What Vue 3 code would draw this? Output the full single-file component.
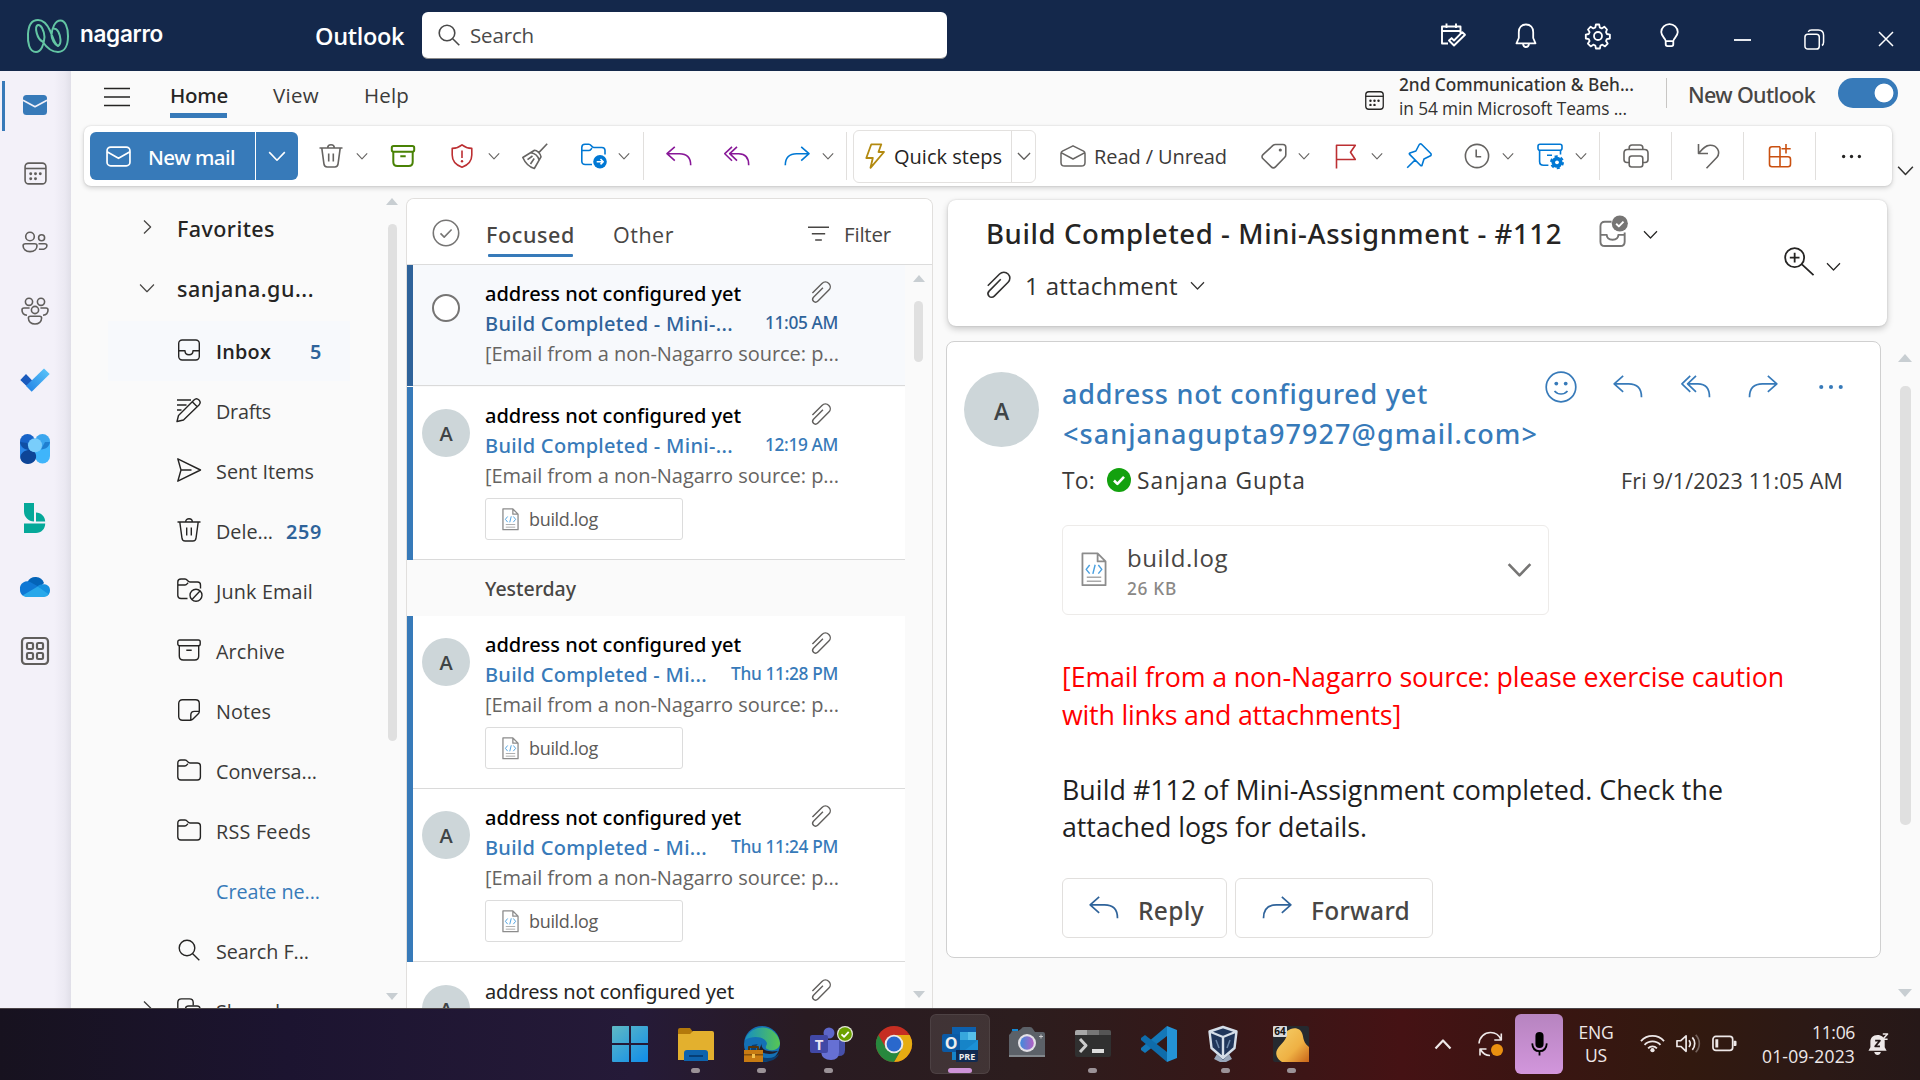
<script setup>
import { h } from 'vue'

// Spreads a label's letters so that it fills the given width in pixels.
const vFit = {
  mounted(el, { value }) {
    const count = [...el.textContent].length
    const natural = el.getBoundingClientRect().width
    el.style.letterSpacing = ((value - natural) / count).toFixed(3) + 'px'
  },
}

const glyphs = {
  chev: ['0 0 12 12', '<path d="M.8 3.4 6 8.8l5.2-5.4"/>'],
  chevRight: ['0 0 12 16', '<path d="M2 1.5 8.6 8 2 14.5"/>'],
  search: ['0 0 24 24', '<circle cx="10" cy="10" r="7.8"/><path d="m15.7 15.7 6.6 6.6"/>'],
  menu: ['0 0 26 20', '<path d="M0 1.5h26M0 10h26M0 18.5h26"/>'],
  mailFill: ['0 0 24 20', '<rect width="24" height="20" rx="3.5" fill="#377ab9" stroke="none"/><path d="m0 5.2 12 6.6 12-6.6" stroke="#f3f1f9" stroke-width="1.6"/>'],
  mail: ['0 0 24 20', '<rect x="1" y="1" width="22" height="18" rx="3.5"/><path d="m1 5.5 11 6.3 11-6.3"/>'],
  calendar: ['0 0 24 24', '<rect x="2" y="2" width="20" height="20" rx="3.5"/><path d="M2 7.2h20"/><g fill="currentColor" stroke="none"><circle cx="7.4" cy="12.2" r="1.4"/><circle cx="12" cy="12.2" r="1.4"/><circle cx="16.6" cy="12.2" r="1.4"/><circle cx="7.4" cy="17" r="1.4"/><circle cx="12" cy="17" r="1.4"/></g>'],
  people: ['0 0 26 22', '<circle cx="8" cy="5.5" r="4.3"/><circle cx="19.6" cy="6.8" r="3"/><path d="M3.5 12.7h9.2c1.4 0 2.3.8 2.3 2 0 3.3-2.6 5.9-7 5.9s-6.900-2.600-6.900-5.900c0-1.200 1-2 2.400-2ZM16.5 12.7h6.200c1.300 0 2.200.8 2.200 2 0 2-2.400 3.600-5.300 3.600-1 0-1.900-.1-2.600-.4"/>'],
  groups: ['0 0 28 28', '<circle cx="8" cy="4.8" r="3.6"/><circle cx="20" cy="4.8" r="3.6"/><circle cx="14" cy="13" r="3.6"/><path d="M9.300 19.300h9.400c1 0 1.900.6 1.900 1.800 0 3.400-2.700 5.900-6.600 5.900s-6.600-2.500-6.600-5.900c0-1.200.900-1.800 1.900-1.800ZM8.600 11H3c-1.300 0-2 .8-2 2 0 3 2 5 5 5.300M19.400 11H25c1.300 0 2 .8 2 2 0 3-2 5-5 5.300"/>'],
  todo: ['0 0 30 24', '<g stroke="none"><path d="M6 6 12.200 12.500 6.500 18 .300 12Z" fill="#195abd"/><path d="M11.700 23.700 6 18 24 .5 29.700 6Z" fill="url(#todoG)"/></g><defs><linearGradient id="todoG" x1="0" y1="1" x2="1" y2="0"><stop stop-color="#2080e5"/><stop offset="1" stop-color="#5cc8fa"/></linearGradient></defs>'],
  viva: ['0 0 30 30', '<g stroke="none"><path d="M0 7.500h15V22a7.500 7.500 0 0 1-15 0Z" fill="#2077da"/><path d="M15 7.500h15V22a7.500 7.500 0 0 1-15 0Z" fill="#3fb5fb"/><circle cx="7.500" cy="7.500" r="7.500" fill="#1763c8"/><circle cx="22.500" cy="7.500" r="7.500" fill="#3ba6ee"/><path d="M30 8c-1 5-4 7-9 7.500l4-7.500Z" fill="#1f7fd0"/><path d="M0 8c1 5 4 7.500 9 8L7 9Z" fill="#0f4fa5"/><path d="M6 16h6c5 2 5.500 9 1.500 12-3.500 2.800-9 2.500-12-1C-1 22 1 17 6 16Z" fill="#0d4597"/><path d="M0 10c1 4 4 5.500 8 6-5 1-7 4-8 7Z" fill="#2a85e6"/><circle cx="15" cy="11.300" r="7" fill="#79cdfb"/></g>'],
  bookings: ['0 0 22 30', '<g fill="#05a899" stroke="none"><path d="M0 0h10v18.500C4.500 18.500 0 14 0 8.500ZM12 9.500c5 0 9.200 4 9.200 9H12ZM0 20.500h21.200c0 5.500-4 9.500-9.200 9.500H0Z"/></g>'],
  cloud: ['0 0 30 20', '<g stroke="none"><path d="M7.500 5A9 9 0 0 1 24 6l-6 6Z" fill="#0364b8"/><path d="M0 12.500A7.200 7.200 0 0 1 11 5.500L21 11 3 18.700A7 7 0 0 1 0 12.500Z" fill="#0f78d4"/><path d="M17.500 9.500C20 6.500 30 5.500 30 13.500c0 2.500-1.200 4-2.500 5Z" fill="#1490df"/><path d="M2.500 18.500 17.700 9.600l11 7.700C27.500 19 26 20 24 20H7c-2 0-3.500-.6-4.500-1.500Z" fill="#28a8ea"/></g>'],
  apps: ['0 0 28 28', '<rect x="1" y="1" width="26" height="26" rx="3.500"/><rect x="6" y="6" width="6" height="6" rx="1.300"/><rect x="16" y="6" width="6" height="6" rx="1.300"/><rect x="6" y="16" width="6" height="6" rx="1.300"/><rect x="16" y="16" width="6" height="6" rx="1.300"/>'],
  inbox: ['0 0 24 24', '<rect x="1.700" y="2" width="20.600" height="20" rx="3.500"/><path d="M1.700 12.800H8c0 2.500 1.800 4 4 4s4-1.500 4-4h6.300"/>'],
  drafts: ['0 0 24 24', '<path d="M0 2h14M0 7h9.500M0 12h4.500M0 23.500l1.500-6L17 2c1.500-1.500 3.500-1.500 5 0s1.500 3.300 0 4.900L6.500 22ZM15.500 4l4.500 4.600"/>'],
  send: ['0 0 24 24', '<path d="m.8.8 22.700 11.200L.8 23.200 4 12ZM4 12h10.500"/>'],
  trash: ['0 0 24 24', '<path d="M.5 4h23M8.700 3.800C8.700 2 10.200.7 12 .7s3.300 1.300 3.300 3.100M2.800 4.200l2.100 15.500c.2 2 1.400 3.300 3.300 3.300h7.600c1.900 0 3.100-1.300 3.300-3.300L21.200 4.200M9.700 9.500v8M14.300 9.500v8"/>'],
  folder: ['0 0 24 22', '<path d="M.8 4C.8 2.200 2 1 3.800 1H8c1.300 0 2 .8 2.600 1.600.7.900 1.200 1.400 2.400 1.400h7.400c1.800 0 3 1.200 3 3v11c0 1.800-1.200 3-3 3H3.800c-1.800 0-3-1.200-3-3ZM.8 7h7c1.500 0 2-1 3-2.200"/>'],
  junk: ['0 0 26 24', '<path d="M10.500 20.500H4c-2 0-3.200-1.200-3.200-3V4C.8 2 2 1 4 1h4c2.500 0 2.500 3 5 3h7.500c2 0 3 1 3 3v3.500M.8 7H8c1.500 0 2-1 3-2.200"/><circle cx="19" cy="17.200" r="6"/><path d="m15 21.400 8-8.400"/>'],
  archive: ['0 0 24 22', '<rect x=".8" y="1" width="22.400" height="5.800" rx="1.800"/><path d="M2.300 6.800V17c0 2.500 1.500 4 4 4h11.400c2.500 0 4-1.500 4-4V6.800M9.300 11.300h5.400"/>'],
  note: ['0 0 24 24', '<path d="M5.500 1.700h13c2.300 0 3.800 1.400 3.800 3.700v7.800c0 1-.3 1.900-1 2.600l-5.300 5.300c-.7.700-1.600 1.100-2.600 1.100H5.500c-2.300 0-3.800-1.400-3.800-3.700V5.400c0-2.300 1.500-3.700 3.800-3.700ZM13.800 22v-5c0-2.300 1.300-3.600 3.600-3.600h4.700"/>'],
  shared: ['0 0 24 24', '<path d="M8 20H4.500c-2.300 0-3.700-1.400-3.700-3.700V4.500C.8 2.200 2.200.9 4.500.9h8c2.300 0 3.700 1.400 3.700 3.600v3"/><rect x="8.500" y="8" width="14.500" height="15" rx="3"/>'],
  shield: ['0 0 24 24', '<path d="M12 .8c2.700 2.200 6 3.400 9.800 3.600V11c0 6-3.600 10-9.800 12.200C5.800 21 2.200 17 2.200 11V4.400C6 4.200 9.300 3 12 .8ZM12 6.500v7.500"/><circle cx="12" cy="17.300" r="1.200" fill="currentColor" stroke="none"/>'],
  broom: ['0 0 26 26', '<path d="M25.200.8 16.800 9.600M12.500 7.200c2.500 0 6.500 3.800 6.500 6.600L12.300 25.500C7.500 24 3 19.500.8 14.500ZM9 9.700c4.200.7 7 3.500 8 7M5.500 16.700l5-3.700M8.500 21l3.700-5.500"/>'],
  folderMove: ['0 0 26 26', '<path d="M11 21.500H4.200c-2 0-3.400-1.300-3.400-3.300V4.400C.8 2.500 2 1.200 4 1.200h3.800c2.500 0 2.500 3.300 5 3.300h8c2 0 3.200 1 3.200 3v4M.8 7.500h7C9.500 7.500 10 6 11 5"/><circle cx="19" cy="18.700" r="6.800" fill="currentColor" stroke="none"/><path d="M15.700 18.700h6.300M19.500 16l2.700 2.700-2.700 2.700" stroke="#fff"/>'],
  reply: ['0 0 26 20', '<path d="M8.800.8 1 7.700l7.800 7M1 7.700h12.500c7 0 11.200 4 11.200 11.500"/>'],
  replyAll: ['0 0 26 20', '<path d="M8 .8.800 7.700 8 14.700M13 .8 5.700 7.700 13 14.700M5.700 7.700h9c6.500 0 10 4 10 11.500"/>'],
  forward: ['0 0 26 20', '<path d="m17.200.8 7.800 6.900-7.800 7M25 7.700H12.500C5.500 7.700 1.300 11.700 1.300 19.200"/>'],
  bolt: ['0 0 20 26', '<path d="M6.300 1.300h10L13.500 9H19L5.500 24.800 7.800 15H1.300Z"/>'],
  openMail: ['0 0 26 22', '<path d="M1 8.500c0-1 .5-1.800 1.400-2.300L13 .8l10.600 5.400c.9.500 1.400 1.300 1.400 2.300v9c0 2.300-1.500 3.600-3.700 3.600H4.700C2.500 21.100 1 19.800 1 17.500ZM1.500 7.800 13 14l11.500-6.200"/>'],
  tag: ['0 0 26 26', '<path d="M14.500 1.500H22c1.800 0 2.800 1 2.800 2.800v7.500c0 1-.3 1.800-1 2.500l-9.300 9.600c-1.300 1.300-3 1.300-4.200 0L2 15.800c-1.300-1.300-1.300-2.900 0-4.200l10-9.200c.7-.6 1.500-.9 2.500-.9Z"/><circle cx="19.300" cy="7" r="1.600" fill="currentColor" stroke="none"/>'],
  flag: ['0 0 26 26', '<path d="M3.500 25.500V2.200h18.800L17.500 9.300l4.800 7.200H3.500"/>'],
  pin: ['0 0 26 26', '<path d="m15.500 1.200 9.300 9.300c.7 1 .4 1.900-.8 2.500l-6 3-2 6.300c-.3.600-.9.700-1.400.2L3.600 11.400c-.5-.6-.3-1.200.3-1.400l6-2L13 2c.6-1.200 1.500-1.500 2.500-.8ZM9 17l-7.800 7.800"/>'],
  clock: ['0 0 26 26', '<circle cx="13" cy="13" r="11.600"/><path d="M12.200 6.500v7.300h5"/>'],
  archiveGear: ['0 0 28 26', '<rect x="1" y="1.200" width="24" height="6" rx="2"/><path d="M2.600 7.200v11.300c0 2.400 1.500 3.800 4 3.800h4.800M23.500 7.200v4.300M10 12.300h5"/><g stroke="none" fill="currentColor"><circle cx="20" cy="19.300" r="5.500"/></g><circle cx="20" cy="19.300" r="6" stroke-width="2" stroke-dasharray="3.140 3.140"/><circle cx="20" cy="19.300" r="1.900" fill="#fff" stroke="none"/>'],
  print: ['0 0 26 24', '<path d="M6.200 5.500V3.800C6.200 2 7.300 1 9 1h8c1.700 0 2.800 1 2.800 2.800v1.700M6.200 18.500H4c-1.900 0-3-1.200-3-3V9c0-2.200 1.400-3.500 3.500-3.500h17C23.600 5.500 25 6.800 25 9v6.500c0 1.800-1.100 3-3 3h-2.200"/><rect x="6.200" y="12" width="13.600" height="11" rx="2.500"/>'],
  undo: ['0 0 26 26', '<path d="M3.500 1v9.500H13M3.800 10.200C7.500 6 10 2.500 15 2.300c7-.2 11 6.500 7 12L11.500 25.200"/>'],
  addin: ['0 0 26 26', '<path d="M13 3.800H5c-1.600 0-2.500.9-2.500 2.500v14.900c0 1.600.9 2.500 2.500 2.500h16c1.600 0 2.500-.9 2.500-2.500v-5c0-1.500-.9-2.400-2.500-2.400H2.500M13 3.800v19.900M19 1v9.600M14.500 5.800h9.200"/>'],
  dots: ['0 0 24 24', '<g fill="currentColor" stroke="none"><circle cx="3" cy="12" r="1.900"/><circle cx="12" cy="12" r="1.900"/><circle cx="21" cy="12" r="1.900"/></g>'],
  calCheck: ['0 0 26 26', '<path d="M8 20.500H2V3.500h18.500v6.800M2 8h18.500M6.500.500v4.500M16 .500v4.500M9 17.500l5 5 11-10.700-2.700-2.600-8.300 8.300-2.400-2.400Z"/>'],
  bell: ['0 0 24 26', '<path d="M12 1.500c-4.500 0-7.200 3.200-7.200 7.500v6L2.500 20.300h19L19.200 15V9c0-4.300-2.700-7.500-7.200-7.500ZM9 20.800c.3 2 1.500 3.200 3 3.200s2.700-1.200 3-3.200"/>'],
  gear: ['0 0 26 26', '<circle cx="13" cy="13" r="4"/><path d="m10.900 1.500-.6 3-2 .9-2.600-1.700-2.700 2.800 1.600 2.600-.8 1.900-3 .600v3.900l3 .600.8 2-1.700 2.500 2.800 2.800 2.600-1.700 2 .8.6 3h4l.6-3 1.900-.8 2.600 1.700 2.700-2.800-1.700-2.500.8-2 3.100-.6v-3.900l-3-.600-.9-1.900L22 6.500l-2.700-2.800-2.600 1.700-1.900-.9-.6-3Z"/>'],
  bulb: ['0 0 20 26', '<path d="M6 19v3.500c0 1 .8 1.800 1.800 1.800h4.400c1 0 1.800-.8 1.800-1.800V19M6 19c0-2.500-4.700-5-4.700-9.500A8.600 8.600 0 0 1 10 1.200a8.600 8.600 0 0 1 8.700 8.300C18.700 14 14 16.500 14 19Z"/>'],
  restore: ['0 0 22 22', '<rect x="1" y="5.500" width="15" height="15.500" rx="3"/><path d="M4.500 3C5 1.500 6.500 1 8 1h7c3.500 0 5.500 2 5.500 5.500V14c0 1.500-.5 2.700-1.700 3.300"/>'],
  close: ['0 0 16 16', '<path d="m1 1 14 14M15 1 1 15"/>'],
  tick: ['0 0 28 28', '<circle cx="14" cy="14" r="12.700"/><path d="m8.500 14.400 3.700 3.700 7.400-7.600"/>'],
  filter: ['0 0 22 16', '<path d="M0 1.200h22M4 8h14M7.500 14.800h7"/>'],
  clip: ['0 0 22 24', '<path d="M1.500 12.500 11.500 2.500c2-2 5.200-2 7.200 0s2 5 0 7L7 21.300c-1.300 1.300-3.200 1.300-4.400 0s-1.200-3 0-4.300L12.500 7"/>'],
  file: ['0 0 18 24', '<path d="M1 1h10.500L17 6.500V23H1ZM11.500 1v5.500H17" stroke="#8c8c8c"/><path d="M4 17.500h10M4 20.300h10" stroke="#aaa" stroke-width="1"/><path d="m6 9-2.400 3L6 15M12 9l2.400 3L12 15M9.800 8.800l-1.600 6.400" stroke="#4aa0e0" stroke-width="1"/>'],
  zoomIn: ['0 0 32 30', '<circle cx="11" cy="11" r="9.800"/><path d="M18.500 18 30.500 29M11 6v10M6 11h10"/>'],
  inboxDone: ['0 0 32 34', '<path d="M13 7H6C3.200 7 1.500 8.700 1.500 11.500v16C1.500 30.300 3.200 32 6 32h16c2.800 0 4.500-1.700 4.500-4.500V18M1.500 20.500H8c0 3.200 2.500 5 6 5s6-1.800 6-5h6.500"/><circle cx="21.500" cy="8.800" r="8.300" fill="currentColor" stroke="none"/><path d="m17.700 9 2.800 2.800 4.800-5" stroke="#fff"/>'],
  smile: ['0 0 32 32', '<circle cx="16" cy="16" r="14.800"/><path d="M9.500 20c3.500 4 9.500 4 13 0"/><g fill="currentColor" stroke="none"><circle cx="11.300" cy="12.600" r="1.900"/><circle cx="20.700" cy="12.600" r="1.900"/></g>'],
  okBadge: ['0 0 24 24', '<circle cx="12" cy="12" r="12" fill="#13a10e" stroke="none"/><path d="m7 12.500 3.400 3.400 6.600-7" stroke="#fff" stroke-width="2.600"/>'],
  // taskbar applications
  windows: ['0 0 36 36', '<g stroke="none" fill="url(#winG)"><path d="M1 0h16v17H0V1Q0 0 1 0ZM19 0h16q1 0 1 1v16H19ZM0 19h17v17H1q-1 0-1-1ZM19 19h17v16q0 1-1 1H19Z"/></g><defs><linearGradient id="winG" gradientUnits="userSpaceOnUse" x1="0" y1="0" x2="30" y2="36"><stop stop-color="#5fb9c4"/><stop offset="1" stop-color="#1590e8"/></linearGradient></defs>'],
  explorer: ['0 0 36 36', '<g stroke="none"><path d="M0 4q0-2 2-2h10l3 4h6v10H0Z" fill="#b3790b"/><path d="M0 8h12l3-3h19q2 0 2 2v27H0Z" fill="#e3b02e"/><path d="M6 35v-8q0-3 3-3h18q3 0 3 3v8Z" fill="#0e63ad"/><path d="M11 29h14v2H11Z" fill="#063f77"/></g>'],
  edge: ['0 0 36 36', '<g stroke="none"><circle cx="18" cy="18" r="18" fill="#1470b5"/><path d="M1 14A18 18 0 0 1 36 17c0 6-7 9-13 6-2-1-1-3 0-5 0-6-12-10-22-4Z" fill="url(#edgeG)"/><path d="M14 18c-5 3 0 15 10 14 5 0 8-2 11-4-2 5-8 8-17 8C9 35 5 26 8 19Z" fill="#0b3f73"/><path d="M18 17c-2 5 3 10 16 8-4 4-14 4-19-1Z" fill="#241d28"/><path d="M0 24h19v12H0Z" fill="#c87b12"/><path d="M5 24v-3h9v3" fill="none" stroke="#57350b" stroke-width="2"/><path d="M0 28h19v1.500H0Z" fill="#83500d"/><path d="M8 28h3v4H8Z" fill="#f2c24f"/></g><defs><linearGradient id="edgeG"><stop stop-color="#168fc1"/><stop offset="1" stop-color="#57c653"/></linearGradient></defs>'],
  teams: ['0 0 44 36', '<g stroke="none"><circle cx="19" cy="7" r="5.500" fill="#5d66c9"/><path d="M24 14h11v10q0 6-6 6h-5Z" fill="#4650aa"/><path d="M11 14h18v12q0 8-8 8-9 0-10-8Z" fill="#6670d4"/><rect y="9" width="18" height="18" rx="2" fill="#4148a6"/><text x="9" y="23.500" text-anchor="middle" font-size="15" font-weight="700" fill="#e9e6f2">T</text><circle cx="35" cy="8" r="8" fill="#e6eadb"/><circle cx="35" cy="8" r="6.800" fill="#6ba100"/></g><path d="m31.500 8.300 2.600 2.600 4.600-5" stroke="#fff" stroke-width="1.800"/>'],
  chrome: ['0 0 36 36', '<g stroke="none"><circle cx="18" cy="18" r="18" fill="#c62e22"/><path d="M18 9h15.600A18 18 0 0 1 18 36l8-14Z" fill="#e6ad12"/><path d="M2.400 9A18 18 0 0 0 18 36l7.800-13.500L10.200 22.500Z" fill="#27883d"/><circle cx="18" cy="18" r="9.300" fill="#eceaea"/><circle cx="18" cy="18" r="7.400" fill="#2a68cc"/></g>'],
  outlook: ['0 0 36 36', '<g stroke="none"><path d="M10 1h24v13H10Z" fill="#0d60ad"/><path d="M18 6h8v8h-8Z" fill="#37a7dd"/><path d="M26 6h8v8h-8Z" fill="#56c0ea"/><path d="M10 14h26v20H10Z" fill="#1684c8"/><path d="m36 14-13 10 13 9Z" fill="#1b90d6"/><rect y="8" width="18" height="18" rx="2" fill="#0b5aa5"/><text x="9" y="22.500" text-anchor="middle" font-size="16" font-weight="700" fill="#eee">O</text><path d="M14 24h22v10q0 2-2 2H14Z" fill="#102b52"/><text x="25" y="33.500" text-anchor="middle" font-size="9" font-weight="700" fill="#eee">PRE</text></g>'],
  camera: ['0 0 36 36', '<g stroke="none"><path d="M2 7q0-2 2-2h5l3-2q1-2 3-2h6q2 0 3 2l2 3h8q2 0 2 2v21q0 2-2 2H2q-2 0-2-2V9Z" fill="#5c6168"/><path d="M0 29h36v2H0Z" fill="#83888d"/><path d="M3 3h6v2H3Z" fill="#1587d0"/><circle cx="18" cy="17" r="9" fill="#e2e0e6"/><circle cx="18" cy="17" r="6.800" fill="url(#camG)"/></g><path d="M32 8.500v4M30 10.500h4" stroke="#ccc" stroke-width="1"/><defs><linearGradient id="camG"><stop stop-color="#3f8bdc"/><stop offset="1" stop-color="#b25fc3"/></linearGradient></defs>'],
  terminal: ['0 0 36 36', '<g stroke="none"><rect y="4" width="36" height="27" rx="2" fill="#303030"/><path d="M0 9V6q0-2 2-2h10v5Z" fill="#a8a8a8"/><path d="M12 4h12v5H12Z" fill="#777"/><path d="M24 4h10q2 0 2 2v3H24Z" fill="#555"/><path d="M17 23h12v4H17Z" fill="#ddd"/></g><path d="m5 13 6 6.500-6 6.500" stroke="#ccc" stroke-width="3"/>'],
  vscode: ['0 0 36 36', '<g stroke="none"><path d="M26 0v10L4 27 0 24v-2Z" fill="#1478b8"/><path d="M26 36V26L4 9 0 12v2Z" fill="#0f6cab"/><path d="m26 0 10 4v28l-10 4Z" fill="#2493d6"/></g>'],
  vbox: ['0 0 30 36', '<g stroke="none"><path d="M9 28h12l3 5-6 3h-6l-6-3Z" fill="#9aa8bb"/><path d="M1 5 15 0l14 5-2 18-12 11L3 23Z" fill="#20365a"/></g><path d="M1.500 5.500 15 11l13.500-5.500M15 11v21M1.500 5.500 15 1l13.500 4.500L26.500 22 15 32 3.500 22Z" stroke="#d5dee8" stroke-width="2.400"/><path d="m8 14 3 8M22 14l-3 8" stroke="#6c87a8" stroke-width="1.500"/>'],
  app64: ['0 0 36 36', '<g stroke="none"><rect width="36" height="36" rx="2" fill="#25292f"/><path d="M14 5c4-3 9-4 13-1 5 5 1 11 9 17v15H9c-5-3-7-8-5-12 3-6 11-10 10-19Z" fill="url(#honeyG)"/><rect width="14" height="11" rx="1" fill="#d9d9d9"/><text x="7" y="9.300" text-anchor="middle" font-size="10" font-weight="700" fill="#111">64</text></g><defs><linearGradient id="honeyG" x2="1" y2="1"><stop stop-color="#f4d06a"/><stop offset=".6" stop-color="#efb144"/><stop offset="1" stop-color="#c96519"/></linearGradient></defs>'],
  up: ['0 0 18 12', '<path d="m1.500 10.500 7.500-8 7.500 8"/>'],
  sync: ['0 0 26 26', '<path d="M1 12.500C1.500 6 6.500 1.500 12.500 1.500c5 0 8.500 2.300 10.300 7M23.300 2.500V9h-7M2 24.500V18h6.500M2.500 18.500C4.500 22 8 24.500 12 24.500"/><circle cx="19" cy="19" r="6" fill="#ea9010" stroke="none"/>'],
  mic: ['0 0 18 26', '<rect x="4.700" y="0" width="8.600" height="17" rx="4.300" fill="#000" stroke="none"/><path d="M1.300 12c.3 5.500 3.200 8.300 7.700 8.300s7.400-2.800 7.700-8.300M9 20.300v4.500"/>'],
  wifi: ['0 0 26 18', '<path d="M1 6.300C7.500-.800 18.500-.800 25 6.300M4.700 10.200c4.600-4.800 12-4.800 16.600 0M8.400 14c2.700-2.800 6.500-2.800 9.200 0"/><circle cx="13" cy="15.800" r="2.200" fill="currentColor" stroke="none"/>'],
  volume: ['0 0 26 20', '<path d="M1 7v6h4l5.500 5V2L5 7ZM13.500 6.500c1.600 2 1.600 5 0 7M17 3.500c3.300 3.700 3.300 9.300 0 13"/><path d="M20.500 1c5 5 5 13 0 18" opacity=".35"/>'],
  battery: ['0 0 26 18', '<rect x="1" y="1.500" width="20.500" height="14.500" rx="3"/><path d="M3.500 4.500h3v8.500h-3ZM22.500 6h2q1 0 1 1v3.500q0 1-1 1h-2Z" fill="currentColor" stroke="none"/>'],
  bellZ: ['0 0 22 24', '<path d="M10 2c-5 0-7.500 3-7.500 7.500V15L.5 18.500h19L17.500 15V8C17 4.500 14 2 10 2ZM6.500 20h7c-.5 2-1.800 3-3.500 3s-3-1-3.500-3Z" fill="currentColor" stroke="none"/><path d="M7.500 8h5l-5 6h5" stroke="#241818" stroke-width="1.800"/><path d="M15.500 1h5l-5 5.500h5" stroke-width="1.600"/>'],
  logo: ['0 0 42 34', '<path d="M17.500 18C17 26 14 33 9 33 2 33 .500 23 1 15 1.500 6 5 1 11 1c5 0 9 4 12 10.500 3 6.500 4 13 8 15.500 4-2 2.500-10 .5-14-1.500-2.500-3.500-4-5-3M17.500 18C17 11 14 5.500 11 6c-4 1.500-1 14 4.500 16.500 4 6 9 10.500 15.500 10.500C38 33 41 26 41 17S38 1.500 33.500 1.500C28 1.500 25 9 24.500 16c0 4 3 9.500 6.500 11"/>'],
}

// One stroked glyph from the set above; s is its width in pixels.
const Icon = (props) => {
  const [box, body] = glyphs[props.n]
  const [, , w, hgt] = box.split(' ').map(Number)
  return h('svg', {
    class: 'icon',
    viewBox: box,
    width: props.s,
    height: (props.s * hgt) / w,
    'stroke-width': ((props.k || 1.5) * w) / props.s,
    innerHTML: body,
  })
}
Icon.props = ['n', 's', 'k']

const rail = [
  { n: 'mailFill', s: 24 }, { n: 'calendar', s: 25 }, { n: 'people', s: 26 },
  { n: 'groups', s: 28 }, { n: 'todo', s: 30 }, { n: 'viva', s: 30 },
  { n: 'bookings', s: 22 }, { n: 'cloud', s: 30 }, { n: 'apps', s: 28, k: 2.2 },
]

const toolsA = [
  { n: 'trash', s: 24, gap: 21 }, { n: 'chev', s: 12, gap: 13 },
  { n: 'archive', s: 24, gap: 23, c: 'green', k: 2 },
  { n: 'shield', s: 24, gap: 35, c: 'red' }, { n: 'chev', s: 12, gap: 14 },
  { n: 'broom', s: 26, gap: 22 },
  { n: 'folderMove', s: 26, gap: 33, c: 'blue' }, { n: 'chev', s: 12, gap: 11 },
  { sep: true, gap: 13 },
  { n: 'reply', s: 26, gap: 22, c: 'purple' }, { n: 'replyAll', s: 26, gap: 32, c: 'purple' },
  { n: 'forward', s: 26, gap: 34, c: 'blue' }, { n: 'chev', s: 12, gap: 12 },
  { sep: true, gap: 12 },
]
const toolsB = [
  { n: 'tag', s: 26, gap: 35 }, { n: 'chev', s: 12, gap: 11 },
  { n: 'flag', s: 26, gap: 23, c: 'red' }, { n: 'chev', s: 12, gap: 12 },
  { n: 'pin', s: 26, gap: 23, c: 'blue' },
  { n: 'clock', s: 26, gap: 32 }, { n: 'chev', s: 12, gap: 12 },
  { n: 'archiveGear', s: 28, gap: 23, c: 'blue' }, { n: 'chev', s: 12, gap: 10 },
  { sep: true, gap: 12 }, { n: 'print', s: 26, gap: 23 },
  { sep: true, gap: 22 }, { n: 'undo', s: 26, gap: 23 },
  { sep: true, gap: 22 }, { n: 'addin', s: 26, gap: 23, c: 'orange' },
  { sep: true, gap: 22 }, { n: 'dots', s: 21, gap: 25, c: 'dark' },
]

const folders = [
  { n: 'inbox', t: 'Inbox', w: 55, count: '5', cw: 12, active: true },
  { n: 'drafts', t: 'Drafts', w: 55 },
  { n: 'send', t: 'Sent Items', w: 98 },
  { n: 'trash', t: 'Dele...', w: 57, count: '259', cw: 36 },
  { n: 'junk', t: 'Junk Email', w: 97 },
  { n: 'archive', t: 'Archive', w: 69 },
  { n: 'note', t: 'Notes', w: 55 },
  { n: 'folder', t: 'Conversa...', w: 101 },
  { n: 'folder', t: 'RSS Feeds', w: 95 },
  { t: 'Create ne...', w: 104, link: true },
  { n: 'search', t: 'Search F...', w: 93 },
  { n: 'shared', t: 'Shared', w: 64, more: true },
]

const mails = [
  { subject: 'Build Completed - Mini-...', sw: 248, time: '11:05 AM', tw: 73, open: true },
  { subject: 'Build Completed - Mini-...', sw: 248, time: '12:19 AM', tw: 73, file: true },
  { group: 'Yesterday' },
  { subject: 'Build Completed - Mi...', sw: 222, time: 'Thu 11:28 PM', tw: 107, file: true },
  { subject: 'Build Completed - Mi...', sw: 222, time: 'Thu 11:24 PM', tw: 107, file: true },
  { subject: '', sw: 0, time: '', tw: 0, read: true },
]

const apps = [
  { n: 'windows' }, { n: 'explorer', run: true }, { n: 'edge', run: true },
  { n: 'teams', s: 44, run: true }, { n: 'chrome' }, { n: 'outlook', front: true },
  { n: 'camera' }, { n: 'terminal', run: true }, { n: 'vscode' },
  { n: 'vbox', s: 30, run: true }, { n: 'app64', run: true },
]
</script>

<template>
  <div class="screen">
    <header class="titlebar">
      <Icon class="logo" n="logo" s="42" k="2" />
      <span class="brand" v-fit="83">nagarro</span>
      <span class="product" v-fit="89">Outlook</span>
      <div class="searchbox">
        <Icon n="search" s="24" k="1.6" />
        <span v-fit="64">Search</span>
      </div>
      <div class="caption">
        <Icon n="calCheck" s="26" k="1.9" />
        <Icon n="bell" s="24" k="1.8" />
        <Icon n="gear" s="26" k="1.8" />
        <Icon n="bulb" s="19" k="1.8" />
        <i class="minimize"></i>
        <Icon class="low" n="restore" s="21" k="1.5" />
        <Icon class="low" n="close" s="16" k="1.5" />
      </div>
    </header>

    <div class="body">
      <nav class="rail">
        <div v-for="(r, i) in rail" :key="r.n" class="rail-cell" :class="{ current: i === 0 }">
          <Icon :n="r.n" :s="r.s" :k="r.k || 1.6" />
        </div>
      </nav>

      <main class="main">
        <div class="tabs">
          <Icon n="menu" s="26" k="1.5" />
          <span class="tab on"><b v-fit="58">Home</b></span>
          <span class="tab view"><span v-fit="46">View</span></span>
          <span class="tab help"><span v-fit="45">Help</span></span>
          <div class="meeting">
            <Icon n="calendar" s="21" k="1.3" />
            <div class="meeting-text">
              <b v-fit="235">2nd Communication &amp; Beh...</b>
              <span v-fit="228">in 54 min Microsoft Teams ...</span>
            </div>
          </div>
          <span class="switch-label"><span v-fit="127">New Outlook</span></span>
          <i class="switch"></i>
        </div>

        <div class="ribbon-row">
          <div class="ribbon">
            <div class="newmail">
              <div class="newmail-main">
                <Icon n="mail" s="25" k="1.7" />
                <span v-fit="87">New mail</span>
              </div>
              <div class="newmail-more"><Icon n="chev" s="18" k="1.6" /></div>
            </div>
            <template v-for="(t, i) in toolsA" :key="'a' + i">
              <i v-if="t.sep" class="sep" :style="{ marginLeft: t.gap + 'px' }"></i>
              <Icon v-else :class="t.c" :n="t.n" :s="t.s" :k="t.k || (t.n === 'chev' ? 1.1 : 1.6)" :style="{ marginLeft: t.gap + 'px' }" />
            </template>
            <div class="quick">
              <Icon class="gold" n="bolt" s="20" k="1.8" />
              <span v-fit="108">Quick steps</span>
              <div class="quick-more"><Icon n="chev" s="14" k="1.3" /></div>
            </div>
            <Icon class="open-mail" n="openMail" s="26" k="1.5" />
            <span class="read-label"><span v-fit="133">Read / Unread</span></span>
            <template v-for="(t, i) in toolsB" :key="'b' + i">
              <i v-if="t.sep" class="sep" :style="{ marginLeft: t.gap + 'px' }"></i>
              <Icon v-else :class="t.c" :n="t.n" :s="t.s" :k="t.n === 'chev' ? 1.1 : 1.6" :style="{ marginLeft: t.gap + 'px' }" />
            </template>
          </div>
          <Icon class="collapse" n="chev" s="17" k="1.5" />
        </div>

        <div class="content">
          <section class="folders">
            <div class="tree">
              <div class="account">
                <Icon class="fold right" n="chevRight" s="12" k="1.3" /><span v-fit="98">Favorites</span>
              </div>
              <div class="account second">
                <Icon class="fold" n="chev" s="16" k="1.2" /><span v-fit="137">sanjana.gu...</span>
              </div>
              <div v-for="f in folders" :key="f.t" class="folder" :class="{ active: f.active, link: f.link }">
                <Icon v-if="f.more" class="twisty" n="chevRight" s="12" k="1.3" />
                <div class="folder-icon"><Icon v-if="f.n" :n="f.n" :s="f.n === 'junk' ? 26 : 24" k="1.4" /></div>
                <span class="folder-name"><span v-fit="f.w">{{ f.t }}</span></span>
                <span v-if="f.count" class="count"><span v-fit="f.cw">{{ f.count }}</span></span>
              </div>
            </div>
            <div class="scroll"><i class="tri-up"></i><i class="thumb"></i><i class="tri-down"></i></div>
          </section>

          <section class="list">
            <div class="list-head">
              <Icon class="all" n="tick" s="28" k="1.6" />
              <span class="pivot on"><b v-fit="89">Focused</b></span>
              <span class="pivot other"><span v-fit="61">Other</span></span>
              <div class="filter"><Icon n="filter" s="21" k="1.5" /><span v-fit="47">Filter</span></div>
            </div>
            <div class="list-body">
              <div class="rows">
                <template v-for="(m, i) in mails" :key="i">
                  <div v-if="m.group" class="group"><span v-fit="91">{{ m.group }}</span></div>
                  <article v-else class="mail" :class="{ open: m.open, read: m.read }">
                    <i v-if="m.open" class="ring"></i>
                    <span v-else class="avatar">A</span>
                    <div class="lines">
                      <div class="line from">
                        <span v-fit="m.read ? 249 : 256">address not configured yet</span>
                        <Icon n="clip" s="21" k="1.4" />
                      </div>
                      <template v-if="!m.read">
                        <div class="line subject">
                          <span v-fit="m.sw">{{ m.subject }}</span>
                          <time><span v-fit="m.tw">{{ m.time }}</span></time>
                        </div>
                        <div class="line preview"><span v-fit="354">[Email from a non-Nagarro source: p...</span></div>
                        <div v-if="m.file" class="chip"><Icon n="file" s="17" k="1.3" /><span v-fit="69">build.log</span></div>
                      </template>
                    </div>
                  </article>
                </template>
              </div>
              <div class="scroll"><i class="tri-up"></i><i class="thumb"></i><i class="tri-down"></i></div>
            </div>
          </section>

          <section class="reading">
            <div class="subject-card">
              <div class="subject-left">
                <div class="subject-line">
                  <h1 v-fit="576">Build Completed - Mini-Assignment - #112</h1>
                  <Icon class="done" n="inboxDone" s="31" k="1.9" /><Icon n="chev" s="15" k="1.2" />
                </div>
                <div class="attach-line">
                  <Icon n="clip" s="26" k="1.6" /><span v-fit="153">1 attachment</span><Icon class="att-chev" n="chev" s="15" k="1.2" />
                </div>
              </div>
              <div class="zoom"><Icon n="zoomIn" s="31" k="1.8" /><Icon class="zoom-chev" n="chev" s="15" k="1.2" /></div>
            </div>

            <div class="message-row">
              <div class="message">
                <span class="avatar big">A</span>
                <div class="message-main">
                  <div class="message-head">
                    <div class="sender">
                      <span v-fit="366">address not configured yet</span>
                      <span class="addr" v-fit="475">&lt;sanjanagupta97927@gmail.com&gt;</span>
                    </div>
                    <div class="actions">
                      <Icon n="smile" s="32" k="1.7" />
                      <Icon n="reply" s="30" k="1.7" />
                      <Icon n="replyAll" s="30" k="1.7" />
                      <Icon n="forward" s="30" k="1.7" />
                      <Icon n="dots" s="26" />
                    </div>
                  </div>
                  <div class="to">
                    <span v-fit="33">To:</span><Icon n="okBadge" s="24" /><span v-fit="169">Sanjana Gupta</span>
                    <span class="date"><span v-fit="222">Fri 9/1/2023 11:05 AM</span></span>
                  </div>
                  <div class="file-card">
                    <Icon n="file" s="26" k="1.8" />
                    <div class="file-text"><span v-fit="101">build.log</span><b v-fit="50">26 KB</b></div>
                    <Icon class="file-chev" n="chev" s="25" k="2.6" />
                  </div>
                  <div class="warn"><span v-fit="722">[Email from a non-Nagarro source: please exercise caution</span><span v-fit="339">with links and attachments]</span></div>
                  <div class="text"><span v-fit="661">Build #112 of Mini-Assignment completed. Check the</span><span v-fit="305">attached logs for details.</span></div>
                  <div class="buttons">
                    <div class="btn reply-btn"><Icon n="reply" s="30" k="1.7" /><span v-fit="66">Reply</span></div>
                    <div class="btn forward-btn"><Icon n="forward" s="30" k="1.7" /><span v-fit="99">Forward</span></div>
                  </div>
                </div>
              </div>
              <div class="scroll"><i class="tri-up"></i><i class="thumb"></i><i class="tri-down"></i></div>
            </div>
          </section>
        </div>
      </main>
    </div>

    <footer class="taskbar">
      <div class="apps">
        <div v-for="a in apps" :key="a.n" class="app" :class="{ front: a.front, run: a.run }">
          <Icon :class="a.n" :n="a.n" :s="a.s || 36" />
        </div>
      </div>
      <div class="tray">
        <Icon class="t-up" n="up" s="18" k="2.2" />
        <Icon class="t-sync" n="sync" s="26" k="1.6" />
        <div class="mic"><Icon n="mic" s="17" k="1.8" /></div>
        <div class="lang"><span v-fit="35">ENG</span><span v-fit="22">US</span></div>
        <Icon class="t-wifi" n="wifi" s="25" k="1.8" />
        <Icon class="t-vol" n="volume" s="25" k="1.7" />
        <Icon class="t-bat" n="battery" s="25" k="1.7" />
        <div class="clock"><span v-fit="43">11:06</span><span v-fit="93">01-09-2023</span></div>
        <Icon class="t-bell" n="bellZ" s="21" />
      </div>
    </footer>
  </div>
</template>

<style>
body { margin: 0; background: #fafafa; overflow: hidden; }
</style>

<style scoped>
.screen { width: 1920px; height: 1080px; overflow: hidden; display: flex; flex-direction: column; font-family: "Open Sans", "Noto Sans", sans-serif; font-size: 20px; color: #252423; background: #fafafa; }
.screen span, .screen b, h1 { white-space: nowrap; flex: none; }
b, h1, .from, .subject, .sender, .btn, .account, .group, .newmail, .switch-label, .count { font-family: "Noto Sans", "Open Sans", sans-serif; font-weight: 500; }
.icon { display: block; flex: none; fill: none; stroke: currentColor; stroke-linejoin: round; overflow: visible; }

/* Title bar */
.titlebar { height: 71px; flex: none; display: flex; align-items: center; background: #14284b; color: #fff; }
.logo { margin-left: 27px; color: #63c5a3; }
.brand { margin-left: 11px; margin-top: -4px; font-family: Inter, sans-serif; font-weight: 600; font-size: 22.5px; }
.product { margin-top: 1px; margin-left: 152px; font-weight: 600; font-size: 23.5px; }
.searchbox { box-sizing: border-box; width: 525px; height: 47px; margin-left: 18px; padding-left: 15px; display: flex; align-items: center; gap: 9px; background: #fff; border-radius: 6px; border-bottom: 1px solid #8a8a8a; color: #4a4a4a; font-size: 20.5px; }
.caption { margin-left: 493px; display: flex; align-items: center; }
.caption .icon:nth-child(2) { margin-left: 48px; }
.caption .icon:nth-child(3) { margin-left: 47px; }
.caption .icon:nth-child(4) { margin-left: 49px; }
.minimize { width: 17px; height: 2px; margin: 8px 0 0 55px; background: #e6e9ee; }
.caption .low { margin-top: 7px; margin-left: 53px; }

.body { flex: none; height: 937px; display: flex; overflow: hidden; }
.rail { flex: none; width: 71px; height: 937px; display: flex; flex-direction: column; background: linear-gradient(90deg, #f3f1f9 0, #f3f1f9 54px, #ebe9f2 65px, #e0dfe8 71px); color: #605e5c; }
.rail-cell { box-sizing: border-box; height: 69px; padding: 0 1px 1px 0; display: flex; align-items: center; justify-content: center; }
.rail-cell.current { height: 68px; margin-left: 2px; padding: 0 6px 0 0; border-left: 3px solid #377ab9; border-image: linear-gradient(transparent 11px, #377ab9 11px, #377ab9 59px, transparent 59px) 1; border-width: 0 0 0 3px; }
.rail-cell:last-child { height: 59px; }

.main { flex: none; width: 1849px; height: 937px; display: flex; flex-direction: column; }
.tabs { height: 55px; flex: none; display: flex; align-items: center; padding-left: 33px; font-size: 20.5px; }
.tabs > .icon { margin-top: -3px; }
.tab { height: 55px; margin-left: 40px; line-height: 49px; color: #3b3a39; }
.tab.on { color: #252423; }
.tab.on::after { content: ""; display: block; width: 57px; height: 5px; margin-top: -7px; background: #377ab9; }
.tab > * { display: inline-block; }
.tab.view { margin-left: 45px; }
.tab.help { margin-left: 45px; }
.meeting { margin-left: 955px; width: 302px; height: 30px; display: flex; align-items: center; border-right: 1px solid #c8c6c4; margin-top: -11px; }
.meeting > .icon { margin-top: 14px; }
.meeting-text { display: flex; flex-direction: column; align-items: flex-start; margin: 8px 0 0 14px; font-size: 17.3px; line-height: 24px; color: #323130; }
.switch-label { margin-left: 21px; margin-top: -9px; font-size: 21.5px; color: #484644; }
.switch-label span { display: inline-block; }
.switch { width: 60px; height: 30px; margin-left: 23px; margin-top: -11px; border-radius: 15px; background: radial-gradient(circle at 46px 15px, #fff 9px, #377ab9 9.800px); }

/* Ribbon */
.ribbon-row { flex: none; height: 60px; display: flex; padding-left: 13px; }
.ribbon { box-sizing: border-box; width: 1808px; height: 60px; padding-left: 6px; display: flex; align-items: center; background: #fff; border-radius: 7px; box-shadow: 0 2px 5px rgba(0, 0, 0, .17), 0 0 2px rgba(0, 0, 0, .14); color: #666462; position: relative; }
.newmail { width: 208px; height: 48px; display: flex; border-radius: 6px; overflow: hidden; color: #fff; font-size: 20.5px; flex: none; }
.newmail-main { width: 149px; padding-left: 16px; display: flex; align-items: center; gap: 17px; background: #377ab9; border-right: 1px solid #fff; }
.newmail-more { flex: 1; display: flex; align-items: center; justify-content: center; background: #377ab9; padding-right: 1px; }
.newmail-main span, .quick > span, .read-label { margin-top: 1px; }
.sep { width: 1px; height: 48px; flex: none; background: #e1dfdd; }
.green { color: #498205; } .red { color: #bc2f32; } .blue { color: #0078d4; } .purple { color: #881798; } .orange { color: #ca5010; } .gold { color: #b38a10; } .dark { color: #252423; }
.quick { box-sizing: border-box; width: 183px; height: 53px; flex: none; margin-left: 6px; padding-left: 11px; display: flex; align-items: center; gap: 9px; border: 1px solid #e3e1df; border-radius: 6px; color: #252423; font-size: 20px; }
.quick-more { height: 51px; width: 22px; display: flex; align-items: center; justify-content: flex-end; border-left: 1px solid #e1dfdd; color: #605e5c; margin-left: 0; }
.quick-more .icon { margin-right: 3px; }
.open-mail { margin-left: 24px; }
.read-label { width: 132px; margin-left: 8px; color: #3b3a39; font-size: 20px; }
.read-label span { display: inline-block; }
.collapse { margin: 36px 0 0 5px; color: #323130; }

.content { flex: 1; display: flex; height: 822px; }
.scroll { flex: none; display: flex; flex-direction: column; align-items: center; }
.tri-up { flex: none; border: 6px solid transparent; border-top: 0; border-bottom: 7px solid #c8ced2; }
.tri-down { flex: none; border: 6px solid transparent; border-bottom: 0; border-top: 7px solid #c8ced2; }
.thumb { flex: none; width: 9px; border-radius: 5px; background: #e0e0e0; }

/* Folder tree */
.folders { width: 335px; flex: none; display: flex; overflow: hidden; height: 822px; }
.tree { width: 315px; padding-top: 12px; }
.account { height: 60px; display: flex; align-items: center; font-size: 21.5px; color: #252423; }
.account.second { height: 63px; }
.account.second span { margin-top: -3px; }
.account .fold { margin: -3px 22px 0 68px; color: #484644; }
.account .fold.right { margin: -3px 23px 0 71px; }
.folder { box-sizing: border-box; position: relative; height: 60px; width: 279px; padding: 0 28px 0 106px; display: flex; align-items: center; color: #3b3a39; font-size: 19.800px; }
.folder.active { color: #252423; font-weight: 600; background: linear-gradient(90deg, transparent 37px, #f7f9fc 37px); }
.folder-icon { width: 24px; height: 24px; display: flex; align-items: center; color: #252423; margin-top: -2px; }
.twisty { position: absolute; left: 71px; top: 19px; }
.folder-name { margin-left: 15px; }
.folder-name span, .count span { display: inline-block; }
.folder.link { color: #377ab9; }
.count { margin-left: auto; color: #2f639a; font-weight: 600; }
.folders .scroll { width: 12px; }
.folders .tri-up { margin-top: 12px; }
.folders .thumb { height: 517px; margin-top: 19px; }
.folders .tri-down { margin-top: 252px; }

/* Message list */
.list { box-sizing: border-box; width: 527px; height: 820px; flex: none; margin-top: 12px; border: 1px solid #e1dfdd; border-bottom: 0; border-radius: 8px 8px 0 0; overflow: hidden; background: #fafafa; }
.list-head { height: 65px; display: flex; background: #fff; border-bottom: 1px solid #dcdcdc; font-size: 21.5px; color: #484644; }
.all { margin: 20px 0 0 25px; color: #767574; }
.pivot { margin-left: 26px; line-height: 71px; }
.pivot > * { display: inline-block; }
.pivot.on::after { content: ""; display: block; width: 85px; height: 3px; margin: -16px 0 0 2px; background: #377ab9; border-radius: 1px; }
.pivot.other { margin-left: 38px; }
.filter { margin-left: 134px; height: 70px; display: flex; align-items: center; gap: 15px; font-size: 20.5px; }
.list-body { display: flex; height: 754px; }
.rows { width: 498px; }
.mail { box-sizing: border-box; height: 173px; display: flex; background: #fff; border-bottom: 1px solid #dadada; border-left: 6px solid #377ab9; border-image: linear-gradient(90deg, #377ab9 6px, #dadada 6px) 6 0 1 6; border-width: 0 0 1px 6px; }
.mail.open { height: 121px; margin-bottom: 1px; background: #f7f9fc; border-image: linear-gradient(90deg, #2f639a 6px, #dadada 6px) 6 0 1 6; }
.mail.read { border-image: none; border-left-color: #fff; padding-top: 1px; }
.avatar { width: 48px; height: 48px; margin: 22px 0 0 9px; border-radius: 50%; background: #cdd6d9; text-align: center; font-size: 20px; font-weight: 600; line-height: 50px; color: #3f4446; }
.ring { box-sizing: border-box; flex: none; width: 28px; height: 28px; margin: 29px 10px 0 19px; border: 2px solid #767574; border-radius: 50%; background: #fff; }
.lines { width: 353px; margin-left: 15px; padding-top: 13px; }
.line { display: flex; align-items: center; height: 30px; font-size: 20px; }
.from { color: #000; }
.read .from { font-weight: 400; color: #252423; }
.from .icon { margin-left: auto; margin-right: 6px; color: #605e5c; margin-top: -1px; }
.subject { color: #377ab9; justify-content: space-between; }
.open .subject { color: #2f639a; }
.subject time { display: inline-block; font-size: 17.3px; margin-top: -2px; flex: none; }
.subject time span { display: inline-block; }
.preview { color: #666462; }
.chip { box-sizing: border-box; width: 198px; height: 42px; margin-top: 8px; padding-left: 16px; display: flex; align-items: center; gap: 10px; border: 1px solid #dcdcdc; border-radius: 3px; font-size: 18px; color: #5c5a58; }
.group { height: 56px; padding-left: 78px; line-height: 58px; color: #484644; font-size: 19.500px; }
.group span { display: inline-block; }
.list .scroll { width: 27px; }
.list .tri-up { margin-top: 10px; }
.list .thumb { height: 61px; margin-top: 19px; }
.list .tri-down { margin-top: 629px; }

/* Reading pane */
.reading { width: 987px; flex: none; display: flex; flex-direction: column; }
.subject-card { box-sizing: border-box; width: 939px; height: 126px; flex: none; margin: 14px 0 0 15px; padding: 0 46px 0 38px; display: flex; justify-content: space-between; background: #fff; border-radius: 8px; box-shadow: 0 3px 7px rgba(0, 0, 0, .2), 0 0 2px rgba(0, 0, 0, .16); }
.subject-line { height: 68px; display: flex; align-items: center; color: #252423; }
h1 { margin: 0; font-size: 27.5px; line-height: 36px; }
.done { margin: -5px 13px 0 37px; color: #767574; }
.attach-line { height: 35px; display: flex; align-items: center; font-size: 24px; color: #323130; gap: 12px; }
.attach-line .icon:first-child { margin-right: 1px; }
.zoom { display: flex; padding-top: 47px; gap: 11px; }
.zoom-chev { margin-top: 12px; }
.message-row { display: flex; height: 667px; margin-top: 15px; }
.message { box-sizing: border-box; width: 935px; height: 617px; margin-left: 13px; border: 1px solid #d0d0d0; border-radius: 8px; background: #fff; display: flex; }
.avatar.big { width: 75px; height: 75px; margin: 30px 0 0 17px; font-size: 23px; line-height: 78px; }
.message-main { width: 817px; margin-left: 23px; padding-top: 30px; }
.message-head { display: flex; justify-content: space-between; height: 85px; }
.sender { display: flex; flex-direction: column; align-items: flex-start; width: 420px; color: #377ab9; font-size: 27px; line-height: 40px; padding-top: 2px; }
.sender .addr { margin-left: 1px; }
.actions { display: flex; align-items: center; height: 30px; margin-right: 35px; color: #377ab9; }
.actions .icon { margin-left: 37.500px; }
.actions .icon:nth-child(1) { margin-left: 0; }
.actions .icon:nth-child(2) { margin-left: 36px; }
.actions .icon:nth-child(5) { margin-left: 40px; }
.to { display: flex; align-items: center; height: 46px; font-size: 22.800px; color: #3b3a39; }
.to .icon { margin: 0 6px 0 12px; }
.to .date { margin-left: auto; margin-right: 36px; font-size: 21.500px; }
.date span { display: inline-block; }
.file-card { box-sizing: border-box; width: 487px; height: 90px; margin-top: 22px; padding: 3px 16px 0 18px; display: flex; align-items: center; border: 1px solid #edebe9; border-radius: 6px; }
.file-card .icon { margin-top: -4px; }
.file-text { display: flex; flex-direction: column; align-items: flex-start; margin-left: 20px; font-size: 24px; line-height: 32px; color: #484644; padding-top: 1px; }
.file-text b { font-size: 17.300px; line-height: 29px; color: #8a8886; }
.file-card .file-chev { margin-left: auto; color: #767574; }
.warn, .text { display: flex; flex-direction: column; align-items: flex-start; font-size: 26.800px; line-height: 37.500px; }
.warn { margin-top: 43px; color: #f00; }
.text { margin-top: 38px; line-height: 37px; color: #1f1f1f; }
.buttons { display: flex; gap: 8px; margin-top: 33px; }
.btn { box-sizing: border-box; height: 60px; display: flex; align-items: center; gap: 19px; padding-left: 26px; border: 1px solid #e1dfdd; border-radius: 6px; font-size: 24.500px; color: #484644; }
.btn span { margin-top: 5px; }
.btn .icon { color: #2f639a; }
.reply-btn { width: 165px; }
.forward-btn { width: 198px; }
.message-row .scroll { width: 14px; margin-left: 17px; }
.message-row .tri-up { margin-top: 13px; border-left-width: 7px; border-right-width: 7px; border-bottom-width: 8px; }
.message-row .tri-down { margin-top: 164px; border-left-width: 7px; border-right-width: 7px; border-top-width: 8px; }
.message-row .thumb { width: 11px; height: 439px; margin-top: 24px; }

/* Taskbar */
.taskbar { box-sizing: border-box; height: 72px; flex: none; display: flex; border-top: 1px solid #4a4447; background: linear-gradient(90deg, #17121f 0, #1c1430 15%, #251a38 33%, #291b22 42%, #2c1d1e 53%, #351818 63%, #451214 73%, #3a1512 80%, #32190f 88%, #2b1916 95%, #261818 100%); }
.apps { box-sizing: border-box; display: flex; padding: 5px 0 0 599.500px; width: 1394px; flex: none; gap: 6.200px; }
.app { box-sizing: border-box; position: relative; flex: none; width: 60px; height: 60px; display: flex; align-items: center; justify-content: center; border-radius: 6px; }
.app.front { background: rgba(255, 255, 255, .1); box-shadow: inset 0 0 0 1px rgba(255, 255, 255, .07); }
.app.run::after, .app.front::after { content: ""; position: absolute; left: 25.500px; bottom: 1px; width: 9px; height: 5px; border-radius: 3px; background: #9b9297; }
.app.front::after { left: 18px; width: 24px; background: #ce93d8; }
.app .teams { position: relative; left: 4px; }
.app .vbox { position: relative; left: -2px; }
.tray { display: flex; flex: 1; align-items: center; color: #eee8e8; font-size: 17.500px; padding-left: 40px; height: 70px; }
.t-sync { margin-left: 26px; }
.mic { width: 48px; height: 60px; margin: 0 0 0 11px; display: flex; align-items: center; justify-content: center; border-radius: 6px; background: linear-gradient(#b784c0, #d296dc); color: #000; flex: none; }
.lang { width: 50px; margin-left: 8px; display: flex; flex-direction: column; align-items: center; line-height: 23px; }
.t-wifi { margin-left: 19px; }
.t-vol { margin-left: 11px; }
.t-bat { margin-left: 11px; }
.clock { width: 110px; margin-left: 8px; display: flex; flex-direction: column; align-items: flex-end; line-height: 24px; margin-top: -1px; }
.t-bell { margin-left: 13px; }
</style>
